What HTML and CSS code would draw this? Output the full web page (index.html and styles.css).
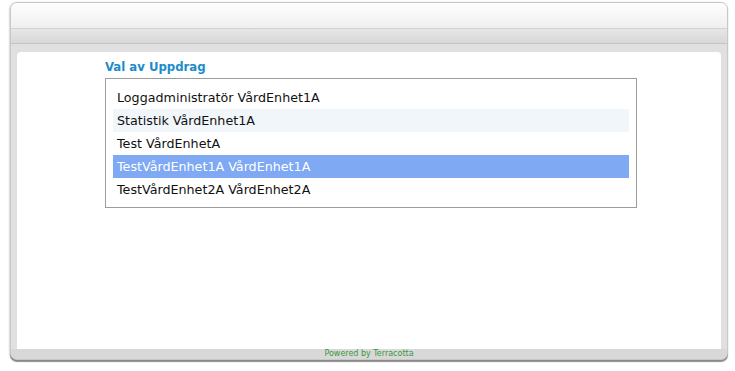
FILE: index.html
```html
<!DOCTYPE html>
<html lang="sv">
<head>
    <meta charset="UTF-8">
    <title>Val av Uppdrag</title>
    <link rel="stylesheet" href="styles.css">
</head>
<body>
    <div class="frame">
        <div class="header-top"></div>
        <div class="header-band"></div>
        <div class="content">
            <h1 class="title">Val av Uppdrag</h1>
            <div class="assignment-list">
                <div class="assignment">Loggadministratör VårdEnhet1A</div>
                <div class="assignment alt">Statistik VårdEnhet1A</div>
                <div class="assignment">Test VårdEnhetA</div>
                <div class="assignment selected">TestVårdEnhet1A VårdEnhet1A</div>
                <div class="assignment">TestVårdEnhet2A VårdEnhet2A</div>
            </div>
        </div>
        <div class="footer">Powered by Terracotta</div>
    </div>
</body>
</html>
```

FILE: styles.css
```css
* {
    margin: 0;
    padding: 0;
    box-sizing: border-box;
}

html, body {
    height: 100%;
    background: #fff;
    font-family: "DejaVu Sans", Verdana, sans-serif;
    overflow: hidden;
}

.frame {
    margin: 2px 0 0 10px;
    width: 718px;
    height: 358px;
    display: flex;
    flex-direction: column;
    background: #e0e0e0;
    border: 1px solid #c8c8c8;
    border-radius: 7px;
    box-shadow: 0 2px 1px rgba(0, 0, 0, 0.45), -1px 0 2px rgba(0, 0, 0, 0.12);
    overflow: hidden;
}

.header-top {
    height: 26px;
    background: linear-gradient(#fefefe, #efefef);
    border-bottom: 1px solid #d2d2d2;
}

.header-band {
    height: 15px;
    background: linear-gradient(#e6e6e6, #d8d8d8);
    border-bottom: 1px solid #c4c4c4;
}

.content {
    flex: 1;
    margin: 8px 6px 0 6px;
    padding: 6px 0 0 88px;
    background: #fff;
    border-radius: 4px 4px 0 0;
}

.title {
    font-family: "DejaVu Sans Condensed", "DejaVu Sans", sans-serif;
    font-size: 13px;
    font-weight: bold;
    color: #1b8cc8;
    line-height: 17px;
    margin-bottom: 3px;
}

.assignment-list {
    width: 532px;
    border: 1px solid #9c9c9c;
    padding: 7px 7px 6px 7px;
}

.assignment {
    height: 23px;
    line-height: 23px;
    padding-left: 4px;
    font-size: 12.7px;
    color: #111;
}

.assignment.alt {
    background: #f1f6fa;
}

.assignment.selected {
    background: #80a9f3;
    color: #fff;
}

.footer {
    height: 10px;
    line-height: 10px;
    text-align: center;
    font-size: 8px;
    color: #3a9a3a;
    background: #d8d8d8;
}
```
